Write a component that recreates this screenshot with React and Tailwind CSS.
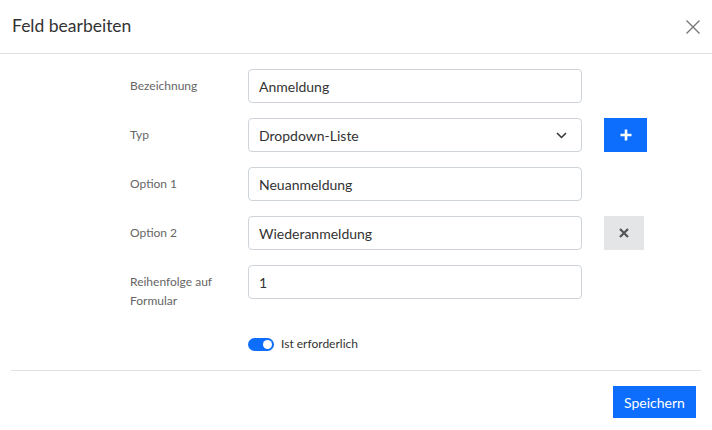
import React from "react";

const font = { fontFamily: "Lato, 'Noto Sans', sans-serif" };

function Row({ label, children, extra }) {
  return (
    <div className="flex items-start">
      <div className="w-[118px] pt-[7px] text-[12px] leading-[19px] text-[#666]">{label}</div>
      <div className="w-[334px]">{children}</div>
      {extra ? <div className="ml-[22px]">{extra}</div> : null}
    </div>
  );
}

function Input({ value, select }) {
  return (
    <div className="flex h-[34px] items-center justify-between rounded-[4px] border border-[#ced4da] bg-white pl-[10px] pr-[14px] text-[14px] text-[#333]">
      <span>{value}</span>
      {select ? (
        <svg width="11" height="7" viewBox="0 0 11 7" fill="none">
          <path d="M1 1l4.5 4.5L10 1" stroke="#333" strokeWidth="1.5" />
        </svg>
      ) : null}
    </div>
  );
}

export default function App() {
  return (
    <div className="h-[430px] w-[712px] overflow-hidden bg-white" style={font}>
      <div className="flex h-[54px] items-center justify-between border-b border-[#dee2e6] pl-[12px] pr-[11px]">
        <div className="text-[17.5px] text-[#333]">Feld bearbeiten</div>
        <svg width="16" height="16" viewBox="0 0 16 16" fill="none">
          <path d="M1.5 1.5l13 13M14.5 1.5l-13 13" stroke="#777" strokeWidth="1.4" />
        </svg>
      </div>
      <div className="flex flex-col gap-[15px] pl-[130px] pt-[15px]">
        <Row label="Bezeichnung">
          <Input value="Anmeldung" />
        </Row>
        <Row
          label="Typ"
          extra={
            <div className="flex h-[34px] w-[43px] items-center justify-center bg-[#0d6efd]">
              <svg width="12" height="12" viewBox="0 0 12 12">
                <path d="M6 0.5v11M0.5 6h11" stroke="#fff" strokeWidth="2.6" />
              </svg>
            </div>
          }
        >
          <Input value="Dropdown-Liste" select />
        </Row>
        <Row label="Option 1">
          <Input value="Neuanmeldung" />
        </Row>
        <Row
          label="Option 2"
          extra={
            <div className="flex h-[34px] w-[40px] items-center justify-center bg-[#e4e5e7]">
              <svg width="10" height="10" viewBox="0 0 10 10">
                <path d="M1 1l8 8M9 1l-8 8" stroke="#555" strokeWidth="2.3" />
              </svg>
            </div>
          }
        >
          <Input value="Wiederanmeldung" />
        </Row>
        <Row
          label={
            <>
              Reihenfolge auf
              <br />
              Formular
            </>
          }
        >
          <Input value="1" />
        </Row>
      </div>
      <div className="mt-[25px] flex h-[18px] items-center pl-[248px]">
        <div className="flex h-[13px] w-[26px] items-center justify-end rounded-full bg-[#0d6efd] pr-[2px]">
          <div className="h-[9px] w-[9px] rounded-full bg-white" />
        </div>
        <span className="ml-[7px] text-[12px] text-[#333]">Ist erforderlich</span>
      </div>
      <div className="mx-[11px] mt-[17px] border-t border-[#dee2e6]" />
      <div className="flex justify-end pr-[16px] pt-[15px]">
        <div className="flex h-[32px] w-[83px] items-center justify-center bg-[#0d6efd] text-[14px] text-white">
          Speichern
        </div>
      </div>
    </div>
  );
}
